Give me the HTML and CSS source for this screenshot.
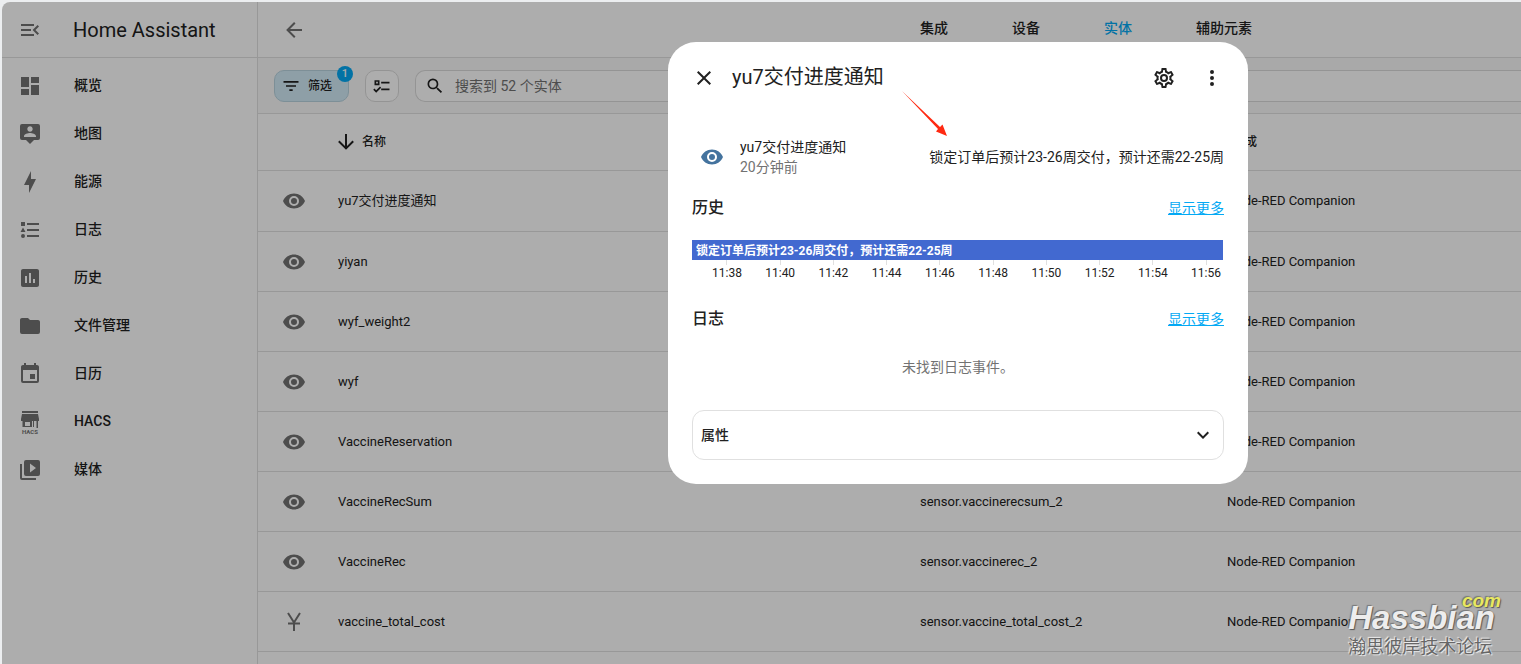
FILE: index.html
```html
<!DOCTYPE html>
<html lang="zh-CN">
<head>
    <meta charset="UTF-8">
    <meta name="viewport" content="width=device-width, initial-scale=1.0">
    <title>Home Assistant</title>
    <link rel="stylesheet" href="styles.css">
</head>
<body>
    <svg class="sprite" aria-hidden="true">
        <symbol id="eye" viewBox="0 0 24 24"><path d="M12,9A3,3 0 0,0 9,12A3,3 0 0,0 12,15A3,3 0 0,0 15,12A3,3 0 0,0 12,9M12,17A5,5 0 0,1 7,12A5,5 0 0,1 12,7A5,5 0 0,1 17,12A5,5 0 0,1 12,17M12,4.5C7,4.5 2.73,7.61 1,12C2.73,16.39 7,19.5 12,19.5C17,19.5 21.27,16.39 23,12C21.27,7.61 17,4.5 12,4.5Z"/></symbol>
    </svg>

    <div class="app">
        <aside class="sidebar">
            <div class="sidebar-header">
                <button class="icon-btn" aria-label="菜单"><svg class="icon" viewBox="0 0 24 24"><path d="M21,15.61L19.59,17L14.58,12L19.59,7L21,8.39L17.44,12L21,15.61M3,6H16V8H3V6M3,13V11H13V13H3M3,18V16H16V18H3Z"/></svg></button>
                <span class="brand">Home Assistant</span>
            </div>
            <nav class="menu">
                <a href="#"><svg class="icon" viewBox="0 0 24 24"><path d="M13,3V9H21V3M13,21H21V11H13M3,21H11V15H3M3,13H11V3H3V13Z"/></svg><span>概览</span></a>
                <a href="#"><svg class="icon" viewBox="0 0 24 24"><path d="M20,2H4A2,2 0 0,0 2,4V16A2,2 0 0,0 4,18H8L12,22L16,18H20A2,2 0 0,0 22,16V4A2,2 0 0,0 20,2M12,4.3C13.5,4.3 14.7,5.5 14.7,7C14.7,8.5 13.5,9.7 12,9.7C10.5,9.7 9.3,8.5 9.3,7C9.3,5.5 10.5,4.3 12,4.3M18,15H6V14.1C6,12.1 10,11 12,11C14,11 18,12.1 18,14.1V15Z"/></svg><span>地图</span></a>
                <a href="#"><svg class="icon" viewBox="0 0 24 24"><path d="M11 15H6L13 1V9H18L11 23V15Z"/></svg><span>能源</span></a>
                <a href="#"><svg class="icon" viewBox="0 0 24 24"><path d="M5,9.5L7.5,14H2.5L5,9.5M3,4H7V8H3V4M5,20A2,2 0 0,0 7,18A2,2 0 0,0 5,16A2,2 0 0,0 3,18A2,2 0 0,0 5,20M9,5V7H21V5H9M9,19H21V17H9V19M9,13H21V11H9V13Z"/></svg><span>日志</span></a>
                <a href="#"><svg class="icon" viewBox="0 0 24 24"><path d="M9 17H7V10H9V17M13 17H11V7H13V17M17 17H15V13H17V17M19 3H5C3.9 3 3 3.9 3 5V19C3 20.1 3.9 21 5 21H19C20.1 21 21 20.1 21 19V5C21 3.9 20.1 3 19 3Z"/></svg><span>历史</span></a>
                <a href="#"><svg class="icon" viewBox="0 0 24 24"><path d="M10,4H4C2.89,4 2,4.89 2,6V18A2,2 0 0,0 4,20H20A2,2 0 0,0 22,18V8C22,6.89 21.1,6 20,6H12L10,4Z"/></svg><span>文件管理</span></a>
                <a href="#"><svg class="icon" viewBox="0 0 24 24"><path d="M19,19H5V8H19M16,1V3H8V1H6V3H5C3.89,3 3,3.89 3,5V19A2,2 0 0,0 5,21H19A2,2 0 0,0 21,19V5C21,3.89 20.1,3 19,3H18V1M17,12H12V17H17V12Z"/></svg><span>日历</span></a>
                <a href="#"><svg class="icon" viewBox="0 0 24 24"><path d="M4 1h16v2H4zM4 4h16l1 5v2H3V9zM4.500 11H6v6H4.500zM6 11h8v6H6zM7 12v4h5v-4zM18.500 11H20v7h-1.500zM15 11h1v6h-1z" fill-rule="evenodd"/><text x="12" y="23.500" font-size="6" font-weight="700" text-anchor="middle">HACS</text></svg><span>HACS</span></a>
                <a href="#"><svg class="icon" viewBox="0 0 24 24"><path d="M4,6H2V20A2,2 0 0,0 4,22H18V20H4V6M20,2H8A2,2 0 0,0 6,4V16A2,2 0 0,0 8,18H20A2,2 0 0,0 22,16V4A2,2 0 0,0 20,2M12,14.5V5.5L18,10L12,14.5Z" fill-rule="evenodd"/></svg><span>媒体</span></a>
            </nav>
        </aside>

        <main class="content">
            <header class="topbar">
                <button class="icon-btn" aria-label="返回"><svg class="icon" viewBox="0 0 24 24"><path d="M20,11V13H8L13.5,18.5L12.08,19.92L4.16,12L12.08,4.08L13.5,5.5L8,11H20Z"/></svg></button>
                <nav class="tabs">
                    <a href="#">集成</a>
                    <a href="#">设备</a>
                    <a href="#" class="active">实体</a>
                    <a href="#">辅助元素</a>
                </nav>
            </header>

            <div class="toolbar">
                <button class="chip chip-filter">
                    <svg class="icon-sm" viewBox="0 0 24 24"><path d="M6,13H18V11H6M3,6V8H21V6M10,18H14V16H10V18Z"/></svg>
                    <span>筛选</span>
                    <span class="badge">1</span>
                </button>
                <button class="chip chip-select" aria-label="选择">
                    <svg class="icon-sm" viewBox="0 0 24 24"><path d="M3,5H9V11H3V5M5,7V9H7V7H5M11,7H21V9H11V7M11,15H21V17H11V15M5,20L1.5,16.5L2.91,15.09L5,17.17L9.59,12.59L11,14L5,20Z"/></svg>
                </button>
                <label class="search">
                    <svg class="icon-sm" viewBox="0 0 24 24"><path d="M9.5,3A6.500,6.500 0 0,1 16,9.500C16,11.110 15.410,12.590 14.440,13.730L14.710,14H15.500L20.500,19L19,20.500L14,15.500V14.710L13.730,14.440C12.590,15.410 11.110,16 9.500,16A6.500,6.500 0 0,1 3,9.500A6.500,6.500 0 0,1 9.500,3M9.500,5C7,5 5,7 5,9.500C5,12 7,14 9.500,14C12,14 14,12 14,9.500C14,7 12,5 9.500,5Z"/></svg>
                    <input type="text" placeholder="搜索到 52 个实体" aria-label="搜索">
                </label>
            </div>

            <table class="entities">
                <colgroup>
                    <col class="col-icon">
                    <col class="col-name">
                    <col class="col-id">
                    <col>
                </colgroup>
                <thead>
                    <tr>
                        <th></th>
                        <th><span class="sorted"><svg class="icon" viewBox="0 0 24 24"><path d="M11,4H13V16L18.5,10.5L19.92,11.92L12,19.84L4.08,11.92L5.5,10.5L11,16V4Z"/></svg>名称</span></th>
                        <th>实体标识符</th>
                        <th class="th-integration">集成</th>
                    </tr>
                </thead>
                <tbody>
                    <tr><td><svg class="icon"><use href="#eye"/></svg></td><td>yu7交付进度通知</td><td>sensor.yu7</td><td>Node-RED Companion</td></tr>
                    <tr><td><svg class="icon"><use href="#eye"/></svg></td><td>yiyan</td><td>sensor.yiyan</td><td>Node-RED Companion</td></tr>
                    <tr><td><svg class="icon"><use href="#eye"/></svg></td><td>wyf_weight2</td><td>sensor.wyf_weight2</td><td>Node-RED Companion</td></tr>
                    <tr><td><svg class="icon"><use href="#eye"/></svg></td><td>wyf</td><td>sensor.wyf</td><td>Node-RED Companion</td></tr>
                    <tr><td><svg class="icon"><use href="#eye"/></svg></td><td>VaccineReservation</td><td>sensor.vaccinereservation</td><td>Node-RED Companion</td></tr>
                    <tr><td><svg class="icon"><use href="#eye"/></svg></td><td>VaccineRecSum</td><td>sensor.vaccinerecsum_2</td><td>Node-RED Companion</td></tr>
                    <tr><td><svg class="icon"><use href="#eye"/></svg></td><td>VaccineRec</td><td>sensor.vaccinerec_2</td><td>Node-RED Companion</td></tr>
                    <tr><td><svg class="icon" viewBox="0 0 24 24"><path class="stroke" d="M6 3L12 12.500L18 3M12 12V21M6 13.500H18"/></svg></td><td>vaccine_total_cost</td><td>sensor.vaccine_total_cost_2</td><td>Node-RED Companion</td></tr>
                </tbody>
            </table>
        </main>

        <div class="scrim"></div>

        <section class="dialog" role="dialog" aria-labelledby="dialog-title">
            <header class="dialog-header">
                <button class="icon-btn" aria-label="关闭"><svg class="icon" viewBox="0 0 24 24"><path d="M19,6.41L17.59,5L12,10.59L6.41,5L5,6.41L10.59,12L5,17.59L6.41,19L12,13.41L17.59,19L19,17.59L13.41,12L19,6.41Z"/></svg></button>
                <h1 id="dialog-title">yu7交付进度通知</h1>
                <button class="icon-btn" aria-label="设置"><svg class="icon" viewBox="0 0 24 24"><path d="M12,8A4,4 0 0,1 16,12A4,4 0 0,1 12,16A4,4 0 0,1 8,12A4,4 0 0,1 12,8M12,10A2,2 0 0,0 10,12A2,2 0 0,0 12,14A2,2 0 0,0 14,12A2,2 0 0,0 12,10M10,22C9.75,22 9.54,21.82 9.5,21.58L9.13,18.93C8.5,18.68 7.96,18.34 7.44,17.94L4.95,18.95C4.73,19.03 4.46,18.95 4.34,18.73L2.34,15.27C2.21,15.05 2.27,14.78 2.46,14.63L4.57,12.97L4.5,12L4.57,11L2.46,9.37C2.27,9.22 2.21,8.95 2.34,8.73L4.34,5.27C4.46,5.05 4.73,4.96 4.95,5.05L7.44,6.05C7.96,5.66 8.5,5.32 9.13,5.07L9.5,2.42C9.54,2.18 9.75,2 10,2H14C14.25,2 14.46,2.18 14.5,2.42L14.87,5.07C15.5,5.32 16.04,5.66 16.56,6.05L19.05,5.05C19.27,4.96 19.54,5.05 19.66,5.27L21.66,8.73C21.79,8.95 21.73,9.22 21.54,9.37L19.43,11L19.5,12L19.43,13L21.54,14.63C21.73,14.78 21.79,15.05 21.66,15.27L19.66,18.73C19.54,18.95 19.27,19.04 19.05,18.95L16.56,17.95C16.04,18.34 15.5,18.68 14.87,18.93L14.5,21.58C14.46,21.82 14.25,22 14,22H10M11.25,4L10.88,6.61C9.68,6.86 8.62,7.5 7.85,8.39L5.44,7.35L4.69,8.65L6.8,10.2C6.4,11.37 6.4,12.64 6.8,13.8L4.68,15.36L5.43,16.66L7.86,15.62C8.63,16.5 9.68,17.14 10.87,17.38L11.24,20H12.76L13.13,17.39C14.32,17.14 15.37,16.5 16.14,15.62L18.57,16.66L19.32,15.36L17.2,13.81C17.6,12.64 17.6,11.37 17.2,10.2L19.31,8.65L18.56,7.35L16.15,8.39C15.38,7.5 14.32,6.86 13.12,6.62L12.75,4H11.25Z"/></svg></button>
                <button class="icon-btn" aria-label="更多"><svg class="icon" viewBox="0 0 24 24"><path d="M12,16A2,2 0 0,1 14,18A2,2 0 0,1 12,20A2,2 0 0,1 10,18A2,2 0 0,1 12,16M12,10A2,2 0 0,1 14,12A2,2 0 0,1 12,14A2,2 0 0,1 10,12A2,2 0 0,1 12,10M12,4A2,2 0 0,1 14,6A2,2 0 0,1 12,8A2,2 0 0,1 10,6A2,2 0 0,1 12,4Z"/></svg></button>
            </header>

            <div class="dialog-body">
                <div class="state-row">
                    <svg class="icon"><use href="#eye"/></svg>
                    <div class="state-info">
                        <div>yu7交付进度通知</div>
                        <div class="muted">20分钟前</div>
                    </div>
                    <div class="state-value">锁定订单后预计23-26周交付，预计还需22-25周</div>
                </div>

                <div class="section-header">
                    <h2>历史</h2>
                    <a href="#">显示更多</a>
                </div>
                <div class="timeline">
                    <div class="timeline-bar">锁定订单后预计23-26周交付，预计还需22-25周</div>
                    <div class="timeline-axis">
                        <span>11:38</span><span>11:40</span><span>11:42</span><span>11:44</span><span>11:46</span><span>11:48</span><span>11:50</span><span>11:52</span><span>11:54</span><span>11:56</span>
                    </div>
                </div>

                <div class="section-header">
                    <h2>日志</h2>
                    <a href="#">显示更多</a>
                </div>
                <p class="empty">未找到日志事件。</p>

                <details class="attributes">
                    <summary>属性<svg class="icon" viewBox="0 0 24 24"><path d="M7.41,8.58L12,13.17L16.59,8.58L18,10L12,16L6,10L7.41,8.58Z"/></svg></summary>
                </details>
            </div>

            <svg class="arrow" viewBox="0 0 48 48"><path d="M1 1L37 39L35 41.500L46 46L41.500 34.500L39 37Z"/></svg>
        </section>

        <div class="watermark">
            <div class="watermark-com">com</div>
            <div class="watermark-name">Hassbian</div>
            <div class="watermark-sub">瀚思彼岸技术论坛</div>
        </div>
    </div>
</body>
</html>
```
FILE: styles.css
```css
* {
    box-sizing: border-box;
}

body {
    margin: 0;
    background: #eceef0;
    color: #212121;
    font-family: Roboto, "Noto Sans CJK SC", sans-serif;
    font-size: 14px;
    line-height: 20px;
}

a {
    color: inherit;
    text-decoration: none;
}

button {
    border: none;
    background: none;
    padding: 0;
    color: inherit;
    font: inherit;
    cursor: pointer;
}

.sprite {
    position: absolute;
    width: 0;
    height: 0;
}

.icon {
    display: block;
    flex: none;
    width: 24px;
    height: 24px;
    fill: currentColor;
}

.icon-sm {
    display: block;
    flex: none;
    width: 20px;
    height: 20px;
    fill: currentColor;
}

.stroke {
    fill: none;
    stroke: currentColor;
    stroke-width: 2;
}

.icon-btn {
    display: flex;
    align-items: center;
    justify-content: center;
    flex: none;
    width: 48px;
    height: 48px;
}

.app {
    position: relative;
    display: flex;
    height: calc(100vh - 2px);
    margin: 2px 0 0 2px;
    background: #fff;
    border-top-left-radius: 8px;
    overflow: hidden;
}

/* sidebar */
.sidebar {
    flex: none;
    width: 256px;
    border-right: 1px solid #e0e0e0;
}

.sidebar-header {
    display: flex;
    align-items: center;
    gap: 19px;
    height: 56px;
    padding-left: 4px;
    border-bottom: 1px solid #e0e0e0;
}

.sidebar-header .icon-btn {
    color: #727272;
}

.brand {
    font-size: 20px;
}

.menu {
    padding-top: 4px;
}

.menu a {
    display: flex;
    align-items: center;
    gap: 32px;
    height: 48px;
    padding-left: 16px;
    font-weight: 500;
}

.menu span {
    padding-bottom: 2px;
}

.menu .icon {
    color: #727272;
}

/* top bar */
.content {
    flex: 1;
    min-width: 0;
}

.topbar {
    display: flex;
    align-items: center;
    height: 56px;
    padding-left: 12px;
    border-bottom: 1px solid #e0e0e0;
}

.topbar .icon-btn {
    color: #727272;
}

.tabs {
    display: flex;
    margin-left: 570px;
    padding-bottom: 4px;
}

.tabs a {
    padding: 0 32px;
    font-weight: 500;
    white-space: nowrap;
}

.tabs .active {
    color: #03a9f4;
}

.toolbar {
    display: flex;
    align-items: center;
    gap: 16px;
    height: 56px;
    padding-left: 16px;
    background: #fafafa;
    border-bottom: 1px solid #e0e0e0;
}

.chip {
    position: relative;
    display: flex;
    align-items: center;
    justify-content: center;
    height: 32px;
    border: 1px solid #dadada;
    border-radius: 10px;
    font-size: 12px;
    font-weight: 500;
}

.chip-filter {
    justify-content: flex-start;
    gap: 7px;
    width: 75px;
    padding-left: 6px;
    background: #d2ebf7;
    border-color: #b8d3df;
}

.chip-select {
    width: 34px;
    background: #fff;
}

.badge {
    position: absolute;
    top: -5px;
    right: -5px;
    width: 16px;
    height: 16px;
    border-radius: 50%;
    background: #03a9f4;
    color: #fff;
    font-size: 11px;
    line-height: 16px;
    text-align: center;
}

.search {
    display: flex;
    align-items: center;
    flex: 1;
    gap: 8px;
    height: 32px;
    padding-left: 9px;
    background: #fff;
    border: 1px solid #dadada;
    border-right: none;
    border-radius: 10px 0 0 10px;
}

.search input {
    flex: 1;
    min-width: 0;
    border: none;
    outline: none;
    background: none;
    color: inherit;
    font: inherit;
}

.search input::placeholder {
    color: #727272;
}

/* entity table */
.entities {
    width: 100%;
    table-layout: fixed;
    border-collapse: separate;
    border-spacing: 0;
    font-size: 13px;
}

.col-icon {
    width: 72px;
}

.col-name {
    width: 582px;
}

.col-id {
    width: 307px;
}

.entities th,
.entities td {
    height: 60px;
    padding: 0 8px;
    border-bottom: 1px solid #e0e0e0;
    text-align: left;
    white-space: nowrap;
}

.entities th {
    height: 57px;
    font-size: 12px;
    font-weight: 500;
}

.entities tbody tr:first-child td {
    height: 61px;
}

.entities .th-integration {
    padding-left: 14px;
}

.entities td .icon {
    margin: 0 auto;
    color: #727272;
}

.sorted {
    display: flex;
    align-items: center;
    gap: 4px;
    margin-left: -4px;
}

/* dialog */
.scrim {
    position: absolute;
    inset: 0;
    background: rgba(0, 0, 0, 0.32);
}

.dialog {
    position: absolute;
    top: 40px;
    left: 666px;
    width: 580px;
    background: #fff;
    border-radius: 28px;
}

.dialog-header {
    display: flex;
    align-items: center;
    height: 72px;
    padding: 0 12px;
}

.dialog-header h1 {
    flex: 1;
    margin: 0 0 0 4px;
    padding-bottom: 2px;
    font-size: 20px;
    line-height: 28px;
    font-weight: 400;
}

.dialog-body {
    padding: 23px 24px 24px;
}

.state-row {
    display: flex;
    align-items: center;
    padding-left: 8px;
}

.state-row .icon {
    color: #44739e;
}

.state-info {
    flex: 1;
    margin-left: 16px;
}

.muted {
    color: #727272;
}

.section-header {
    display: flex;
    align-items: center;
    justify-content: space-between;
    margin-top: 15px;
    height: 32px;
}

.section-header h2 {
    margin: 0;
    font-size: 16px;
    font-weight: 500;
}

.section-header a {
    color: #03a9f4;
    text-decoration: underline;
}

.timeline {
    margin: 16px 1px 22px 0;
}

.timeline-bar {
    height: 20px;
    padding-left: 4px;
    background: #4269d0;
    color: #fff;
    font-size: 12px;
    line-height: 22px;
    font-weight: 700;
}

.timeline-axis {
    display: flex;
    justify-content: space-between;
    padding: 0 2px 0 20px;
    font-size: 12px;
    line-height: 16px;
}

.timeline-axis span {
    display: flex;
    flex-direction: column;
    align-items: center;
}

.timeline-axis span::before {
    content: "";
    width: 1px;
    height: 5px;
    background: #e0e0e0;
}

.empty {
    margin: 22px 0 33px;
    color: #727272;
    text-align: center;
}

.attributes {
    border: 1px solid #e0e0e0;
    border-radius: 12px;
}

.attributes summary {
    display: flex;
    align-items: center;
    justify-content: space-between;
    height: 48px;
    padding: 0 8px;
    font-weight: 500;
    cursor: pointer;
}

.arrow {
    position: absolute;
    top: 48px;
    left: 233px;
    width: 48px;
    height: 48px;
    fill: #ff2a12;
}

/* forum watermark */
.watermark {
    position: absolute;
    right: 20px;
    bottom: 7px;
    color: #ededed;
    font-family: "Liberation Sans", "Noto Sans CJK SC", sans-serif;
    text-shadow: 1px 1px 1px #555, -1px -1px 1px #777;
}

.watermark-com {
    color: #e8e860;
    font-size: 19px;
    line-height: 12px;
    font-style: italic;
    font-weight: 700;
    text-align: right;
}

.watermark-name {
    padding-right: 6px;
    font-size: 33px;
    line-height: 22px;
    font-style: italic;
    font-weight: 700;
}

.watermark-sub {
    color: #666;
    font-size: 18px;
    line-height: 20px;
    margin-top: 8px;
    text-shadow: 1px 1px 1px #eee, -1px -1px 1px #eee;
}
```
